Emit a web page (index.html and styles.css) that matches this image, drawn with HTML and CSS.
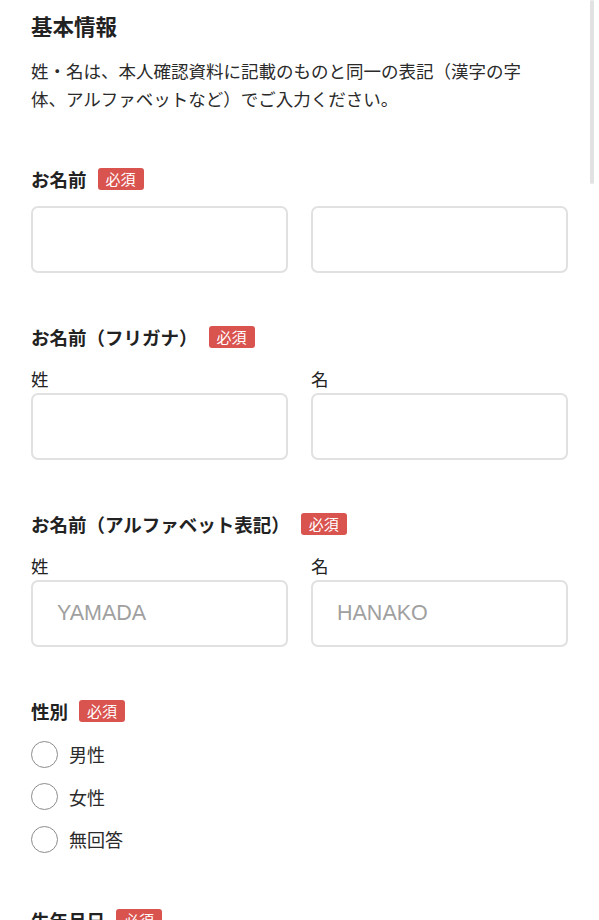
FILE: index.html
```html
<!DOCTYPE html>
<html lang="ja">
<head>
<meta charset="utf-8">
<title>基本情報</title>
<link rel="stylesheet" href="styles.css">
</head>
<body>
<div class="scroll-thumb"></div>
<main class="page">
  <header class="intro">
    <h1 class="title">基本情報</h1>
    <p class="desc">姓・名は、本人確認資料に記載のものと同一の表記（漢字の字体、アルファベットなど）でご入力ください。</p>
  </header>

  <section class="field">
    <div class="field-head"><span class="field-label">お名前</span><span class="badge">必須</span></div>
    <div class="pair pair-tight">
      <div class="cell"><input class="text-input" type="text" aria-label="姓"></div>
      <div class="cell"><input class="text-input" type="text" aria-label="名"></div>
    </div>
  </section>

  <section class="field">
    <div class="field-head"><span class="field-label">お名前（フリガナ）</span><span class="badge">必須</span></div>
    <div class="pair">
      <div class="cell"><label class="sub-label">姓</label><input class="text-input" type="text"></div>
      <div class="cell"><label class="sub-label">名</label><input class="text-input" type="text"></div>
    </div>
  </section>

  <section class="field">
    <div class="field-head"><span class="field-label">お名前（アルファベット表記）</span><span class="badge">必須</span></div>
    <div class="pair">
      <div class="cell"><label class="sub-label">姓</label><input class="text-input" type="text" placeholder="YAMADA"></div>
      <div class="cell"><label class="sub-label">名</label><input class="text-input" type="text" placeholder="HANAKO"></div>
    </div>
  </section>

  <section class="field field-radio">
    <div class="field-head"><span class="field-label">性別</span><span class="badge">必須</span></div>
    <div class="radio-group">
      <label class="radio-row"><input class="radio" type="radio" name="gender"><span>男性</span></label>
      <label class="radio-row"><input class="radio" type="radio" name="gender"><span>女性</span></label>
      <label class="radio-row"><input class="radio" type="radio" name="gender"><span>無回答</span></label>
    </div>
  </section>

  <section class="field">
    <div class="field-head"><span class="field-label">生年月日</span><span class="badge">必須</span></div>
  </section>
</main>
</body>
</html>
```

FILE: styles.css
```css
* { box-sizing: border-box; }

html, body {
  margin: 0;
  padding: 0;
  background: #ffffff;
  overflow: hidden;
}

body {
  font-family: "Noto Sans CJK JP", "Noto Sans", sans-serif;
  color: #222222;
}

.scroll-thumb {
  position: fixed;
  top: 0;
  right: 5px;
  width: 4px;
  height: 184px;
  background: #e2e2e2;
  border-radius: 2px;
}

.page {
  padding: 11px 31px 0 31px;
}

.intro {
  margin-bottom: 54px;
}

.title {
  margin: 0;
  font-size: 21.5px;
  line-height: 30px;
  font-weight: 700;
}

.desc {
  margin: 16px 0 0 0;
  max-width: 505px;
  font-size: 17.5px;
  line-height: 28px;
  color: #2a2a2a;
}

.field {
  margin-bottom: 52px;
}

.field-radio {
  margin-bottom: 47px;
}

.field-head {
  display: flex;
  align-items: center;
  height: 24px;
}

.field-label {
  font-size: 18.5px;
  font-weight: 700;
  line-height: 24px;
  margin-right: 11px;
}

.badge {
  display: inline-flex;
  align-items: center;
  justify-content: center;
  height: 22px;
  padding: 0 8px;
  background: #d9534f;
  color: #ffffff;
  font-size: 15px;
  line-height: 22px;
  border-radius: 3px;
}

.pair {
  display: grid;
  grid-template-columns: 1fr 1fr;
  column-gap: 23px;
  margin-top: 18px;
}

.pair-tight {
  margin-top: 15px;
}

.cell {
  display: flex;
  flex-direction: column;
}

.sub-label {
  font-size: 17.5px;
  line-height: 24px;
  margin-bottom: 2px;
}

.text-input {
  display: block;
  width: 100%;
  height: 67px;
  margin: 0;
  padding: 0 0 0 24px;
  border: 2px solid #e1e1e1;
  border-radius: 7px;
  background: #ffffff;
  font-family: "Liberation Sans", Arial, sans-serif;
  font-size: 21.5px;
  color: #222222;
  outline: none;
}

.text-input::placeholder {
  color: #a0a0a0;
}

.radio-group {
  display: flex;
  flex-direction: column;
  margin-top: 10px;
}

.radio-row {
  display: flex;
  align-items: center;
  height: 42.5px;
  font-size: 18px;
  color: #2a2a2a;
}

.radio {
  -webkit-appearance: none;
  appearance: none;
  width: 27px;
  height: 27px;
  margin: 0 11px 0 0;
  border: 1.6px solid #8c8c8c;
  border-radius: 50%;
  background: #ffffff;
}
```
